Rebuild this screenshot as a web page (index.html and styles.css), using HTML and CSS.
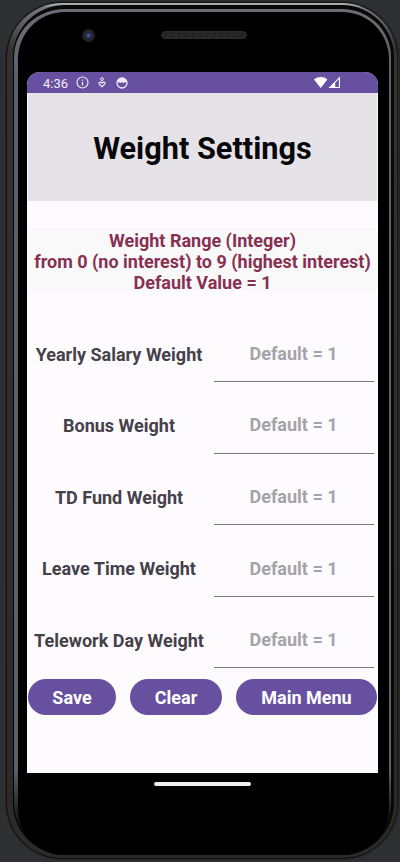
FILE: index.html
```html
<!DOCTYPE html>
<html lang="en">
<head>
<meta charset="utf-8">
<title>Weight Settings</title>
<link rel="stylesheet" href="styles.css">
</head>
<body>
<div class="device">
<div class="rim">
<div class="bezel">
<div class="glass">
  <div class="hardware">
    <div class="camera"></div>
    <div class="speaker"></div>
  </div>
  <main class="screen">
    <div class="status">
      <span class="time">4:36</span>
      <svg class="info" width="13" height="13" viewBox="0 0 13 13"><circle cx="6.5" cy="6.5" r="5.5" fill="none" stroke="#eee9f6" stroke-width="1.2"/><path d="M6.5 5.8v3.7M6.500 3.400v1.300" stroke="#eee9f6" stroke-width="1.3"/></svg>
      <svg class="person" width="8" height="11" viewBox="0 0 8 11"><circle cx="4" cy="2.1" r="1.4" fill="none" stroke="#eee9f6"/><path d="M4 9.700 1.300 7.200C0 5.600 2.500 4.200 4 6.100 5.500 4.200 8 5.600 6.700 7.200Z" fill="none" stroke="#eee9f6" stroke-width="1.2"/></svg>
      <svg class="face" width="12" height="12" viewBox="0 0 12 12"><circle cx="6" cy="6" r="5" fill="none" stroke="#eee9f6" stroke-width="1.3"/><path d="M1.400 5.500C1.400 2.500 3.300.8 6 .8s4.600 1.700 4.600 4.700L9 5.200 8 6 6 5.300 4 6 3 5.200Z" fill="#eee9f6"/></svg>
      <svg class="signal" width="27" height="13" viewBox="0 0 27 13"><path d="M0 3.500C3.500.2 10 .2 13.400 3.500L6.700 12Z" fill="#fff"/><path d="M14.500 12 26 .5V12Z" fill="#fff"/><path d="M21.200 6.700 24.900 3v7.900h-3.700Z" fill="#6750a0"/></svg>
    </div>
    <header class="header"><h1>Weight Settings</h1></header>
    <p class="range">Weight Range (Integer)<br>from 0 (no interest) to 9 (highest interest)<br>Default Value = 1</p>
    <form class="fields">
      <label class="row"><span>Yearly Salary Weight</span><input type="text" placeholder="Default = 1"></label>
      <label class="row"><span>Bonus Weight</span><input type="text" placeholder="Default = 1"></label>
      <label class="row"><span>TD Fund Weight</span><input type="text" placeholder="Default = 1"></label>
      <label class="row"><span>Leave Time Weight</span><input type="text" placeholder="Default = 1"></label>
      <label class="row"><span>Telework Day Weight</span><input type="text" placeholder="Default = 1"></label>
    </form>
    <div class="actions">
      <button class="save">Save</button>
      <button class="clear">Clear</button>
      <button class="menu">Main Menu</button>
    </div>
  </main>
  <div class="home"></div>
</div>
</div>
</div>
</div>
</body>
</html>
```
FILE: styles.css
```css
* { box-sizing: border-box; }
body {
  margin: 0;
  height: 862px;
  overflow: hidden;
  background: #2d2f33;
  font-family: Roboto, sans-serif;
}
.device {
  width: 395px;
  height: 859px;
  margin: 1px 0 0 5px;
  padding: 1px 2px 1px 1px;
  border-radius: 58px;
  background: #262625;
  display: flow-root;
}
.rim {
  height: 857px;
  padding: 2px 3px 3px 6px;
  border-radius: 56px;
  background: linear-gradient(180deg, #b5b6b8 0, #77787a 5px, #343331 45px, #2b2a28 100%);
  border: 1px solid #11110f;
  border-right-color: #171715;
}
.bezel {
  height: 850px;
  padding: 3px 2px 0 4px;
  border-radius: 52px;
  background: linear-gradient(180deg, #6c6d73 0, #6c6d73 5px, #5b6267 60px, #5b6267 760px, #000 825px);
  border-top: 4px solid #090909;
  border-right: 3px solid #080808;
  border-left: 1px solid #000;
}
.glass {
  height: 843px;
  padding: 0 0 0 9px;
  border-radius: 47px;
  background: #000;
}
.hardware {
  display: flex;
  align-items: center;
  height: 60px;
  padding: 0 0 14px 55px;
}
.camera {
  width: 13px;
  height: 13px;
  border-radius: 50%;
  background: radial-gradient(circle, #5260a0 0, #20264c 3px, #24262a 4px, #202020 6px);
}
.speaker {
  width: 86px;
  height: 8px;
  margin-left: 66px;
  border-radius: 4px;
  background: repeating-linear-gradient(120deg, #272827 0 3px, #222323 3px 6px);
  border: 1px solid #2c2c2c;
}
.screen {
  width: 351px;
  height: 701px;
  background: #fefbff;
  border-radius: 13px 13px 0 0;
  overflow: hidden;
}
.status {
  display: flex;
  align-items: center;
  height: 21px;
  padding-left: 16px;
  background: #6750a0;
  color: #f3eff9;
}
.time { width: 25px; font-size: 13px; line-height: 21px; padding-top: 1px; }
.info { margin-left: 8px; }
.person { margin-left: 9px; }
.face { margin-left: 10px; }
.signal { margin-left: 186px; }
.header {
  display: flex;
  align-items: center;
  justify-content: center;
  height: 107.5px;
  margin: 0 1px;
  padding-top: 4px;
  background: #e5e3e8;
}
h1 { margin: 0; font-size: 30.700px; line-height: 36px; font-weight: 700; color: #08080a; }
.range {
  margin: 27px 1px 0;
  height: 63px;
  padding-top: 2px;
  background: #faf9fa;
  color: #873052;
  text-align: center;
  white-space: nowrap;
  font-size: 18px;
  line-height: 21px;
  font-weight: 700;
}
.fields { margin-top: 20px; }
.row {
  display: grid;
  grid-template-columns: 184px 160px;
  column-gap: 3px;
  height: 71.6px;
}
.row span, input {
  font: 700 18px/21px Roboto, sans-serif;
  text-align: center;
}
.row span { padding-top: 33px; color: #454149; }
input {
  width: 160px;
  padding: 15px 1px 0 0;
  border: 0;
  border-bottom: 1px solid #7b787e;
  background: transparent;
  outline: 0;
}
input::placeholder { color: #a5a3a7; opacity: 1; }
.actions { display: flex; padding: 10.500px 1px 0; gap: 14px; }
button {
  height: 36px;
  padding: 2px 0 0;
  border: 0;
  border-radius: 18px;
  background: #6750a0;
  color: #fff;
  font: 700 18px/21px Roboto, sans-serif;
}
.save { width: 88px; }
.clear { width: 92px; }
.menu { width: 141px; }
.home {
  width: 97px;
  height: 4px;
  margin: 9px 0 0 127px;
  border-radius: 2px;
  background: #eeeeec;
}
```
